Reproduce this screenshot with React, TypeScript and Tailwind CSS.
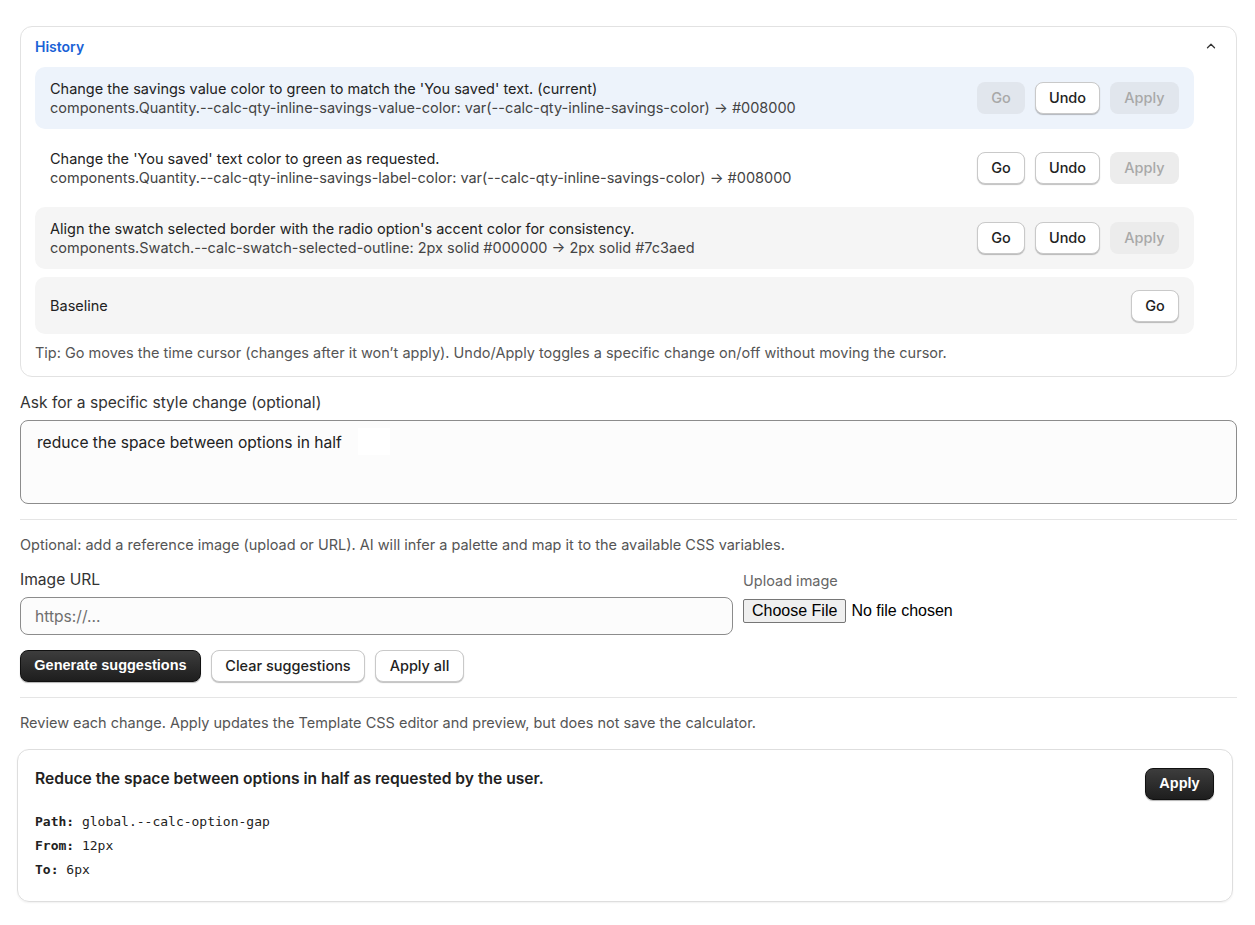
const btn =
  "h-8 px-3 rounded-lg border border-[#c9c9c9] bg-white text-[14.5px] font-medium text-[#222] shadow-[0_1px_1px_rgba(0,0,0,0.25)]";
const btnOff = "h-8 px-3 rounded-lg text-[14.5px] font-medium text-[#a8a8a8]";
const btnDark =
  "h-8 px-[13px] rounded-lg border border-[#111] bg-gradient-to-b from-[#3d3d3d] to-[#1e1e1e] text-white text-[14.5px] font-bold shadow-[0_1px_1px_rgba(0,0,0,0.3)] font-['Liberation_Sans',Arial,sans-serif]";

const rows = [
  {
    title: "Change the savings value color to green to match the 'You saved' text. (current)",
    path: "components.Quantity.--calc-qty-inline-savings-value-color: var(--calc-qty-inline-savings-color) → #008000",
    bg: "bg-[#edf3fb]",
    current: true,
  },
  {
    title: "Change the 'You saved' text color to green as requested.",
    path: "components.Quantity.--calc-qty-inline-savings-label-color: var(--calc-qty-inline-savings-color) → #008000",
    bg: "bg-white",
    current: false,
  },
  {
    title: "Align the swatch selected border with the radio option's accent color for consistency.",
    path: "components.Swatch.--calc-swatch-selected-outline: 2px solid #000000 → 2px solid #7c3aed",
    bg: "bg-[#f5f5f5]",
    current: false,
  },
];

export default function App() {
  return (
    <main className="w-[1255px] min-h-[925px] bg-white pl-5 pr-[18px] pt-[26px] font-['Inter',sans-serif] text-[14.5px] text-[#222]">
      {/* History */}
      <section className="rounded-xl border border-[#e2e2e2] pl-[14px] pr-[10px] pt-[9px] pb-[13px]">
        <div className="flex items-center justify-between h-5">
          <h2 className="text-[14px] font-semibold text-[#1a62d6]">History</h2>
          <svg width="14" height="14" viewBox="0 0 24 24" fill="none" stroke="#333" strokeWidth="2.2" strokeLinecap="round" strokeLinejoin="round" className="mr-[8px]">
            <path d="M6 15l6-6 6 6" />
          </svg>
        </div>
        <div className="mt-[11px] mr-[32px] flex flex-col gap-2">
          {rows.map((r) => (
            <div key={r.title} className={`${r.bg} rounded-[10px] flex items-center justify-between pl-[15px] pr-[15px] h-[62px]`}>
              <div className="leading-[19px]">
                <div className="text-[#222]">{r.title}</div>
                <div className="text-[#444]">{r.path}</div>
              </div>
              <div className="flex gap-[10px]">
                {r.current ? (
                  <button className={`${btnOff} bg-[#e1e6ed] w-12`}>Go</button>
                ) : (
                  <button className={`${btn} w-12`}>Go</button>
                )}
                <button className={`${btn} w-[65px]`}>Undo</button>
                <button className={`${btnOff} w-[69px] ${r.current ? "bg-[#e1e6ed]" : "bg-[#ececec]"}`}>Apply</button>
              </div>
            </div>
          ))}
          <div className="bg-[#f5f5f5] rounded-[10px] flex items-center justify-between pl-[15px] pr-[15px] h-[57px]">
            <div>Baseline</div>
            <button className={`${btn} w-12`}>Go</button>
          </div>
        </div>
        <p className="mt-[9px] text-[#555] leading-5">
          Tip: Go moves the time cursor (changes after it won’t apply). Undo/Apply toggles a specific change on/off without moving the cursor.
        </p>
      </section>

      {/* Prompt */}
      <label className="block mt-4 text-[15.6px] text-[#333] leading-5">Ask for a specific style change (optional)</label>
      <div className="relative mt-[7px]">
        <textarea
          className="block w-full h-[84px] rounded-lg border border-[#8c8c8c] bg-[#fcfcfc] px-4 py-[12px] text-[15.6px] text-[#222] leading-5 resize-none outline-none"
          defaultValue="reduce the space between options in half"
        />
        <div className="absolute left-[338px] top-[8px] w-8 h-[27px] bg-white" />
      </div>

      <hr className="mt-[15px] border-t border-[#e5e5e5]" />
      <p className="mt-[15px] text-[#555] leading-5">
        Optional: add a reference image (upload or URL). AI will infer a palette and map it to the available CSS variables.
      </p>

      <div className="mt-[15px] flex gap-[10px]">
        <div className="w-[713px]">
          <label className="block text-[15.6px] text-[#333] leading-5">Image URL</label>
          <input
            className="mt-[7px] block w-full h-[38px] rounded-lg border border-[#8c8c8c] bg-[#fcfcfc] px-[14px] text-[15.6px] outline-none placeholder:text-[#6f6f6f]"
            placeholder="https://..."
          />
        </div>
        <div>
          <div className="text-[14.5px] text-[#666] leading-5 pt-[1px]">Upload image</div>
          <input
            type="file"
            className="mt-[8px] block text-[16px] leading-5 font-['Liberation_Sans',Arial,sans-serif] text-black file:mr-[5px] file:h-6 file:px-2 file:rounded-[2px] file:border file:border-solid file:border-[#767676] file:bg-[#efefef] file:text-black file:text-[16px]"
          />
        </div>
      </div>

      <div className="mt-[15px] flex gap-[10px]">
        <button className={`${btnDark} w-[181px]`}>Generate suggestions</button>
        <button className={`${btn} w-[154px]`}>Clear suggestions</button>
        <button className={`${btn} w-[89px]`}>Apply all</button>
      </div>

      <hr className="mt-[15px] border-t border-[#e5e5e5]" />
      <p className="mt-[15px] text-[#555] leading-5">
        Review each change. Apply updates the Template CSS editor and preview, but does not save the calculator.
      </p>

      {/* Suggestion */}
      <div className="mt-[16px] ml-[-3px] w-[1216px] rounded-xl border border-[#dedede] shadow-[0_1px_2px_rgba(0,0,0,0.06)] pl-[17px] pr-[18px] pt-[18px] pb-[19px]">
        <div className="flex items-start justify-between">
          <h3 className="mt-[1px] text-[15.6px] font-semibold text-[#222] leading-5">
            Reduce the space between options in half as requested by the user.
          </h3>
          <button className={`${btnDark} w-[69px]`}>Apply</button>
        </div>
        <div className="mt-[10px] font-['DejaVu_Sans_Mono',monospace] text-[13px] leading-6 text-[#222]">
          <div><span className="font-bold">Path:</span> global.--calc-option-gap</div>
          <div><span className="font-bold">From:</span> 12px</div>
          <div><span className="font-bold">To:</span> 6px</div>
        </div>
      </div>
    </main>
  );
}
